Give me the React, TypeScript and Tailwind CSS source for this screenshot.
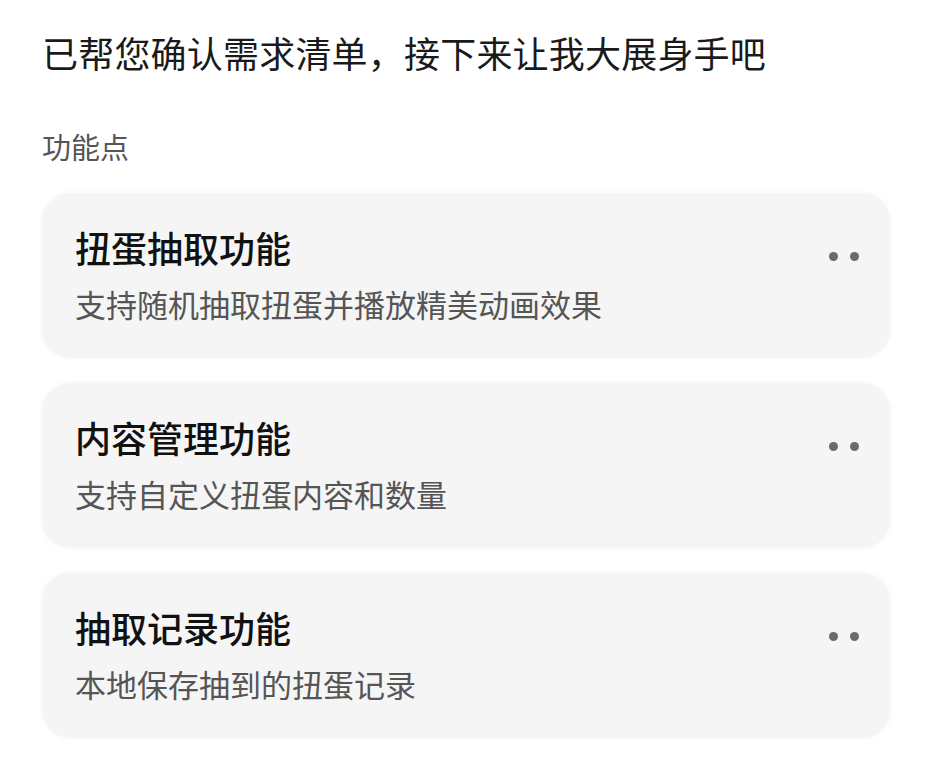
import React from "react";

const items = [
  { title: "扭蛋抽取功能", desc: "支持随机抽取扭蛋并播放精美动画效果" },
  { title: "内容管理功能", desc: "支持自定义扭蛋内容和数量" },
  { title: "抽取记录功能", desc: "本地保存抽到的扭蛋记录" },
];

export default function App() {
  return (
    <div
      className="w-[932px] h-[762px] bg-white pl-[42px] pr-[42px] pt-[29px]"
      style={{ fontFamily: '"Noto Sans CJK SC", "Noto Sans", sans-serif' }}
    >
      <div className="text-[36px] leading-[46px] text-[#1a1a1a] tracking-[0.2px]">
        已帮您确认需求清单，接下来让我大展身手吧
      </div>
      <div className="mt-[53px] text-[29px] leading-[36px] text-[#555555]">功能点</div>
      <div className="mt-[29px] flex flex-col gap-[25px]">
        {items.map((it) => (
          <div
            key={it.title}
            className="h-[165px] rounded-[28px] bg-[#f5f5f5] shadow-[0_0_6px_rgba(0,0,0,0.04)] pl-[33px] pr-[31px] pt-[31px] flex"
          >
            <div className="flex-1">
              <div className="text-[36px] leading-[46px] font-medium text-[#111111]">{it.title}</div>
              <div className="mt-[14px] text-[31px] leading-[40px] text-[#555555]">{it.desc}</div>
            </div>
            <div className="flex gap-[12px] pt-[28px]">
              <span className="block w-[9px] h-[9px] rounded-full bg-[#6b6b6b]" />
              <span className="block w-[9px] h-[9px] rounded-full bg-[#6b6b6b]" />
            </div>
          </div>
        ))}
      </div>
    </div>
  );
}
